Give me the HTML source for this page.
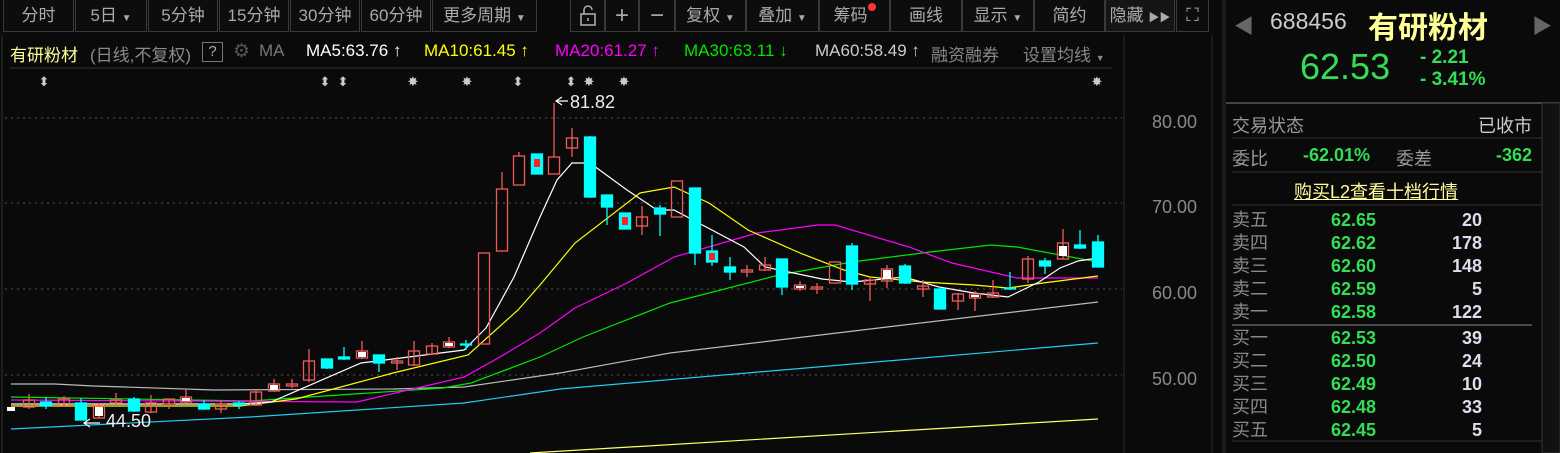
<!DOCTYPE html>
<html><head><meta charset="utf-8"><style>
*{margin:0;padding:0;box-sizing:border-box}
body{width:1560px;height:453px;background:#0a0a0a;overflow:hidden;position:relative;font-family:"Liberation Sans","Noto Sans CJK SC",sans-serif;color:#bbb}
.b{position:absolute;top:0;height:32px;border:1px solid #3a3a3a;border-top:none;background:#0d0d0d;color:#aaa;font-size:17px;line-height:31px;text-align:center}
.t{position:absolute;white-space:nowrap}
.rp{position:absolute;left:1222px;top:0;width:323px;height:453px;border-left:2px solid #2a2a2a}
.ob{position:absolute;left:1232px;font-size:18px;white-space:nowrap}
.g{color:#33dd55;font-weight:bold}
</style></head><body>
<!-- toolbar -->
<div class="b" style="left:3px;width:71px">分时</div>
<div class="b" style="left:75px;width:72px">5日 <span style="font-size:10px">▼</span></div>
<div class="b" style="left:148px;width:70px">5分钟</div>
<div class="b" style="left:219px;width:70px">15分钟</div>
<div class="b" style="left:290px;width:70px">30分钟</div>
<div class="b" style="left:361px;width:70px">60分钟</div>
<div class="b" style="left:432px;width:105px">更多周期 <span style="font-size:10px">▼</span></div>
<div class="b" style="left:570px;width:35px"><svg width="20" height="22" viewBox="0 0 20 22" style="margin-top:5px"><rect x="3" y="9" width="14" height="11" fill="none" stroke="#aaa" stroke-width="1.6"/><path d="M6 9V5a4 4 0 0 1 8 0" fill="none" stroke="#aaa" stroke-width="1.6"/><line x1="10" y1="13" x2="10" y2="16" stroke="#aaa" stroke-width="1.6"/></svg></div>
<div class="b" style="left:605px;width:34px;font-size:24px">+</div>
<div class="b" style="left:639px;width:36px;font-size:24px">−</div>
<div class="b" style="left:675px;width:71px">复权 <span style="font-size:10px">▼</span></div>
<div class="b" style="left:746px;width:73px">叠加 <span style="font-size:10px">▼</span></div>
<div class="b" style="left:819px;width:71px">筹码<span style="display:inline-block;width:8px;height:8px;border-radius:4px;background:#f33;vertical-align:10px"></span></div>
<div class="b" style="left:890px;width:72px">画线</div>
<div class="b" style="left:962px;width:72px">显示 <span style="font-size:10px">▼</span></div>
<div class="b" style="left:1034px;width:71px">简约</div>
<div class="b" style="left:1105px;width:70px;background:#151515">隐藏 <span style="font-size:11px">▶▶</span></div>
<div class="b" style="left:1176px;width:33px;font-size:18px">⛶</div>
<!-- MA line -->
<div class="t" style="left:10px;top:41px;font-size:17px;color:#ffff99">有研粉材</div>
<div class="t" style="left:90px;top:41px;font-size:17px;color:#8a8a8a">(日线,不复权)</div>
<div class="t" style="left:202px;top:42px;width:21px;height:20px;border:1px solid #777;color:#aaa;font-size:15px;text-align:center;line-height:18px">?</div>
<div class="t" style="left:233px;top:40px;font-size:19px;color:#555">⚙</div>
<div class="t" style="left:259px;top:41px;font-size:17px;color:#777">MA</div>
<div class="t" style="left:306px;top:41px;font-size:17px;color:#fff">MA5:63.76 ↑</div>
<div class="t" style="left:424px;top:41px;font-size:17px;color:#ffff00">MA10:61.45 ↑</div>
<div class="t" style="left:555px;top:41px;font-size:17px;color:#ff00ff">MA20:61.27 ↑</div>
<div class="t" style="left:684px;top:41px;font-size:17px;color:#00e600">MA30:63.11 ↓</div>
<div class="t" style="left:815px;top:41px;font-size:17px;color:#ccc">MA60:58.49 ↑</div>
<div class="t" style="left:931px;top:41px;font-size:17px;color:#888">融资融券</div>
<div class="t" style="left:1023px;top:41px;font-size:17px;color:#888">设置均线 <span style="font-size:9px">▼</span></div>
<svg style="position:absolute;left:0;top:0" width="1222" height="453">
<line x1="10" y1="68" x2="1112" y2="68" stroke="#333"/>
<line x1="1124" y1="35" x2="1124" y2="453" stroke="#2a2a2a"/>
<line x1="1212" y1="35" x2="1212" y2="453" stroke="#2a2a2a"/>
<line x1="2" y1="35" x2="2" y2="453" stroke="#333"/>
<g stroke="#555" stroke-dasharray="2,4"><line x1="5" y1="118" x2="1122" y2="118"/><line x1="5" y1="203" x2="1122" y2="203"/><line x1="5" y1="289" x2="1122" y2="289"/><line x1="5" y1="375" x2="1122" y2="375"/></g>
<g fill="#8a8a8a" font-size="18" font-family="Liberation Sans,sans-serif"><text x="1152" y="128">80.00</text><text x="1152" y="213">70.00</text><text x="1152" y="299">60.00</text><text x="1152" y="385">50.00</text></g>
<g fill="#ccc" font-size="13" text-anchor="middle"><text x="44" y="86">⬍</text><text x="325" y="86">⬍</text><text x="343" y="86">⬍</text><text x="518" y="86">⬍</text><text x="571" y="86">⬍</text><text x="413" y="86">✸</text><text x="467" y="86">✸</text><text x="589" y="86">✸</text><text x="624" y="86">✸</text><text x="1097" y="86">✸</text></g>
<!-- MA lines -->
<g fill="none" stroke-width="1.2">
<polyline stroke="#ffff66" points="530,453 1098,419"/>
<polyline stroke="#22ccee" points="11,429 250,417 464,403 560,389 1098,343"/>
<polyline stroke="#bbb" points="11,384 55,384 93,386 125,387 214,390 393,389 464,387 560,373 670,353 887,327 1098,302"/>
<polyline stroke="#00e600" points="11,397 250,401 443,388 471,383 540,357 583,337 670,303 779,275 852,262 930,252 991,245 1017,247 1098,262"/>
<polyline stroke="#ff00ff" points="11,400 357,402 464,377 500,357 540,333 575,308 627,283 674,257 757,233 818,225 835,225 909,247 952,263 1017,278 1098,278"/>
<polyline stroke="#ffff00" points="11,406 240,406 296,399 393,373 468,355 518,310 540,285 575,243 640,193 674,187 709,203 748,230 800,253 844,270 870,277 922,282 974,285 1008,288 1043,283 1098,276"/>
<polyline stroke="#fff" points="11,404 240,404 271,402 361,363 464,350 486,328 514,277 540,217 557,180 572,163 590,163 627,190 657,210 674,210 744,247 765,267 822,279 852,282 904,277 939,287 974,293 1008,297 1039,282 1060,268 1078,261 1098,258"/>
</g>
<!-- candles -->
<g stroke-width="1.3">
<g stroke="#f05a5a" fill="none">
<line x1="29" y1="394" x2="29" y2="409"/><rect x="23.5" y="400" width="11" height="7"/>
<line x1="64" y1="396" x2="64" y2="407"/><rect x="58.5" y="399" width="11" height="6"/>
<line x1="99" y1="403" x2="99" y2="418"/><rect x="93.5" y="405" width="11" height="13"/>
<line x1="116" y1="393" x2="116" y2="405"/><rect x="110.5" y="400" width="11" height="3"/>
<line x1="151" y1="395" x2="151" y2="413"/><rect x="145.5" y="403" width="11" height="9"/>
<line x1="169" y1="399" x2="169" y2="409"/><rect x="163.5" y="399" width="11" height="5"/>
<line x1="186" y1="389" x2="186" y2="403"/><rect x="180.5" y="397" width="11" height="5"/>
<line x1="221" y1="401" x2="221" y2="413"/><rect x="215.5" y="404" width="11" height="5"/>
<line x1="256" y1="390" x2="256" y2="406"/><rect x="250.5" y="392" width="11" height="13"/>
<line x1="274" y1="379" x2="274" y2="392"/><rect x="268.5" y="384" width="11" height="7"/>
<line x1="292" y1="379" x2="292" y2="388"/><rect x="286.5" y="384" width="11" height="2"/>
<line x1="309" y1="349" x2="309" y2="382"/><rect x="303.5" y="361" width="11" height="19"/>
<line x1="362" y1="341" x2="362" y2="359"/><rect x="356.5" y="351" width="11" height="7"/>
<line x1="397" y1="357" x2="397" y2="370"/><rect x="391.5" y="361" width="11" height="2"/>
<line x1="414" y1="341" x2="414" y2="366"/><rect x="408.5" y="351" width="11" height="14"/>
<line x1="432" y1="343" x2="432" y2="355"/><rect x="426.5" y="346" width="11" height="8"/>
<line x1="449" y1="337" x2="449" y2="348"/><rect x="443.5" y="342" width="11" height="5"/>
<rect x="478.5" y="253" width="11" height="91"/>
<line x1="502" y1="172" x2="502" y2="189"/><rect x="496.5" y="189" width="11" height="62"/>
<line x1="519" y1="152" x2="519" y2="156"/><rect x="513.5" y="156" width="11" height="29"/>
<line x1="554" y1="103" x2="554" y2="157"/><rect x="548.5" y="157" width="11" height="17"/>
<line x1="572" y1="128" x2="572" y2="157"/><rect x="566.5" y="138" width="11" height="10"/>
<line x1="642" y1="206" x2="642" y2="235"/><rect x="636.5" y="217" width="11" height="9"/>
<rect x="671.5" y="181" width="11" height="36"/>
<line x1="747" y1="265" x2="747" y2="277"/><rect x="741.5" y="270" width="11" height="2"/>
<line x1="765" y1="257" x2="765" y2="271"/><rect x="759.5" y="265" width="11" height="5"/>
<line x1="800" y1="281" x2="800" y2="291"/><rect x="794.5" y="285" width="11" height="4"/>
<line x1="817" y1="283" x2="817" y2="294"/><rect x="811.5" y="287" width="11" height="2"/>
<rect x="829.5" y="262" width="11" height="21"/>
<line x1="870" y1="278" x2="870" y2="301"/><rect x="864.5" y="280" width="11" height="4"/>
<line x1="887" y1="265" x2="887" y2="288"/><rect x="881.5" y="269" width="11" height="12"/>
<line x1="923" y1="280" x2="923" y2="297"/><rect x="917.5" y="286" width="11" height="3"/>
<line x1="958" y1="293" x2="958" y2="310"/><rect x="952.5" y="294" width="11" height="7"/>
<line x1="975" y1="291" x2="975" y2="311"/><rect x="969.5" y="294" width="11" height="4"/>
<line x1="993" y1="280" x2="993" y2="298"/><rect x="987.5" y="293" width="11" height="4"/>
<line x1="1028" y1="256" x2="1028" y2="283"/><rect x="1022.5" y="259" width="11" height="20"/>
<line x1="1063" y1="229" x2="1063" y2="259"/><rect x="1057.5" y="243" width="11" height="16"/>
</g>
<g fill="#fff"><rect x="7" y="407" width="8" height="4"/><rect x="95" y="407" width="8" height="9"/><rect x="182" y="398" width="8" height="3"/><rect x="270" y="385" width="8" height="5"/><rect x="358" y="352" width="8" height="5"/><rect x="445" y="343" width="8" height="3"/><rect x="796" y="286" width="8" height="2"/><rect x="883" y="270" width="8" height="9"/><rect x="971" y="295" width="8" height="2"/><rect x="1059" y="246" width="8" height="10"/></g>
<g stroke="#00ffff" fill="#00ffff">
<line x1="46" y1="397" x2="46" y2="409"/><rect x="40.5" y="402" width="11" height="4"/>
<line x1="81" y1="398" x2="81" y2="420"/><rect x="75.5" y="403" width="11" height="17"/>
<line x1="134" y1="397" x2="134" y2="412"/><rect x="128.5" y="399" width="11" height="12"/>
<line x1="204" y1="400" x2="204" y2="410"/><rect x="198.5" y="404" width="11" height="5"/>
<line x1="239" y1="401" x2="239" y2="409"/><rect x="233.5" y="403" width="11" height="2"/>
<line x1="327" y1="359" x2="327" y2="369"/><rect x="321.5" y="359" width="11" height="9"/>
<line x1="344" y1="347" x2="344" y2="360"/><rect x="338.5" y="357" width="11" height="2"/>
<line x1="379" y1="355" x2="379" y2="372"/><rect x="373.5" y="355" width="11" height="8"/>
<line x1="466" y1="340" x2="466" y2="350"/><rect x="460.5" y="344" width="11" height="1"/>
<rect x="531.5" y="154" width="11" height="20"/>
<line x1="590" y1="136" x2="590" y2="198"/><rect x="584.5" y="137" width="11" height="60"/>
<line x1="607" y1="195" x2="607" y2="225"/><rect x="601.5" y="195" width="11" height="12"/>
<rect x="619.5" y="213" width="11" height="16"/>
<line x1="660" y1="205" x2="660" y2="236"/><rect x="654.5" y="208" width="11" height="6"/>
<line x1="695" y1="188" x2="695" y2="265"/><rect x="689.5" y="188" width="11" height="65"/>
<line x1="712" y1="235" x2="712" y2="266"/><rect x="706.5" y="251" width="11" height="11"/>
<line x1="730" y1="257" x2="730" y2="280"/><rect x="724.5" y="267" width="11" height="5"/>
<line x1="782" y1="259" x2="782" y2="295"/><rect x="776.5" y="259" width="11" height="28"/>
<line x1="852" y1="243" x2="852" y2="290"/><rect x="846.5" y="246" width="11" height="38"/>
<line x1="905" y1="264" x2="905" y2="284"/><rect x="899.5" y="266" width="11" height="17"/>
<line x1="940" y1="287" x2="940" y2="309"/><rect x="934.5" y="289" width="11" height="20"/>
<line x1="1010" y1="272" x2="1010" y2="290"/><rect x="1004.5" y="288" width="11" height="1"/>
<line x1="1045" y1="258" x2="1045" y2="274"/><rect x="1039.5" y="261" width="11" height="5"/>
<line x1="1080" y1="230" x2="1080" y2="249"/><rect x="1074.5" y="245" width="11" height="3"/>
<line x1="1098" y1="235" x2="1098" y2="267"/><rect x="1092.5" y="242" width="11" height="25"/>
</g>
<g fill="#ff2020"><rect x="534" y="159" width="6" height="8"/><rect x="622" y="217" width="6" height="8"/><rect x="709" y="253" width="6" height="7"/></g>
</g>
<g stroke="#fff" fill="none" stroke-width="1.2"><path d="M568 101 H556 M562 97 L556 101 L562 105"/><path d="M100 423 H84 M90 419 L84 423 L90 427"/></g>
<text x="570" y="108" fill="#eee" font-size="18">81.82</text>
<text x="106" y="427" fill="#eee" font-size="18">44.50</text>
</svg>
<!-- right panel -->
<div class="rp">
<div class="t" style="left:10px;top:10px;color:#666;font-size:20px">◀</div>
<div class="t" style="left:308px;top:10px;color:#666;font-size:20px">▶</div>
<div class="t" style="left:46px;top:8px;color:#ccc;font-size:23px">688456</div>
<div class="t" style="left:144px;top:3px;color:#ffff99;font-size:30px;font-weight:bold">有研粉材</div>
<div class="t" style="left:76px;top:46px;color:#33dd55;font-size:36px">62.53</div>
<div class="t" style="left:196px;top:47px;color:#33dd55;font-size:19px;font-weight:bold;line-height:22px">-&nbsp;2.21<br>-&nbsp;3.41%</div>
</div>
<svg style="position:absolute;left:1222px;top:0" width="338" height="453">
<line x1="0" y1="103" x2="338" y2="103" stroke="#444" stroke-width="2"/>
<line x1="10" y1="138" x2="320" y2="138" stroke="#333"/>
<line x1="10" y1="172" x2="320" y2="172" stroke="#333"/>
<line x1="10" y1="205" x2="320" y2="205" stroke="#333"/>
<line x1="10" y1="325" x2="310" y2="325" stroke="#888"/>
<line x1="10" y1="441" x2="320" y2="441" stroke="#333"/>
<rect x="320" y="103" width="18" height="350" fill="#111" stroke="#333"/>
<rect x="0" y="0" width="4" height="453" fill="#1a1a1a"/>
</svg>
<div class="ob" style="top:112px;color:#999">交易状态</div>
<div class="ob" style="left:1478px;top:112px;color:#ccc">已收市</div>
<div class="ob" style="top:145px;color:#999">委比</div>
<div class="ob g" style="left:1303px;top:145px">-62.01%</div>
<div class="ob" style="left:1396px;top:145px;color:#999">委差</div>
<div class="ob g" style="left:1496px;top:145px">-362</div>
<div class="ob" style="left:1294px;top:178px;color:#ffff99;text-decoration:underline">购买L2查看十档行情</div>
<div class="ob" style="top:209px;color:#888;line-height:22.9px">卖五<br>卖四<br>卖三<br>卖二<br>卖一</div>
<div class="ob g" style="left:1331px;top:209px;line-height:22.9px">62.65<br>62.62<br>62.60<br>62.59<br>62.58</div>
<div class="ob" style="left:1420px;top:209px;width:62px;text-align:right;color:#dde;font-weight:bold;line-height:22.9px">20<br>178<br>148<br>5<br>122</div>
<div class="ob" style="top:327px;color:#888;line-height:22.9px">买一<br>买二<br>买三<br>买四<br>买五</div>
<div class="ob g" style="left:1331px;top:327px;line-height:22.9px">62.53<br>62.50<br>62.49<br>62.48<br>62.45</div>
<div class="ob" style="left:1420px;top:327px;width:62px;text-align:right;color:#dde;font-weight:bold;line-height:22.9px">39<br>24<br>10<br>33<br>5</div>
</body></html>
